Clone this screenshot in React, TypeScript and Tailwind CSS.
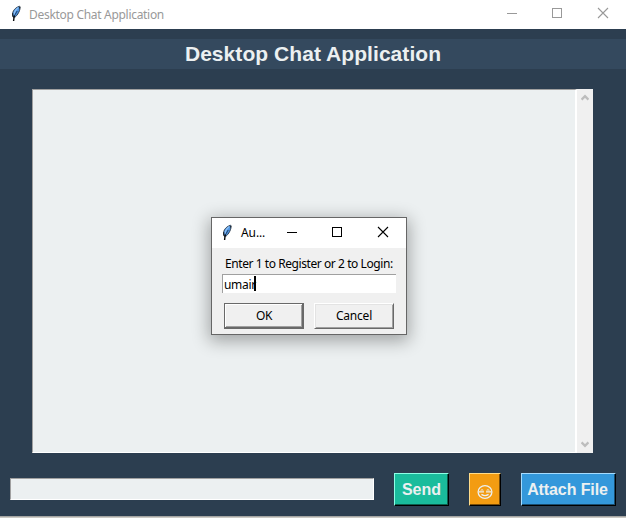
const Feather = () => (
  <svg width="12" height="17" viewBox="0 0 12 17" aria-hidden="true">
    <path d="M3.2 12.2C1.3 8 3.6 3.2 9.6 1.2C11 2 9.4 8.5 5.2 12Z" fill="#4d94e4" stroke="#26323f" strokeWidth="0.9" />
    <path d="M8.4 2.6C6.2 4 4.4 6.6 4 9.6" fill="none" stroke="#8cc0f5" strokeWidth="1.3" />
    <path d="M7.2 6C5.6 8.6 4.6 10.4 4.2 12" fill="none" stroke="#10243c" strokeWidth="0.8" />
    <path d="M4.2 10.5L3.6 16" fill="none" stroke="#050709" strokeWidth="1.4" />
    <path d="M2.8 8.2V11.5M9.4 3.5L9.9 2" stroke="#111" strokeWidth="0.9" />
  </svg>
);

const WindowControls = ({ className }: { className: string }) => (
  <svg width="107" height="12" viewBox="0 0 107 12" className={className} shapeRendering="crispEdges" fill="none" stroke="currentColor" aria-hidden="true">
    <path d="M1 6.5h10M46.5 1.5h9v9h-9z" />
    <path d="M92 1l10 10M102 1l-10 10" shapeRendering="auto" strokeWidth="1.1" />
  </svg>
);

const ScrollArrow = ({ down = false }: { down?: boolean }) => (
  <svg width="8" height="7" viewBox="0 0 8 7" className={down ? "rotate-180" : ""} aria-hidden="true">
    <path d="M0.5 5.6L4 2.1L7.5 5.6" fill="none" stroke="#bdbdbd" strokeWidth="2.4" />
  </svg>
);

const Emoji = () => (
  <svg width="16" height="16" viewBox="0 0 16 16" fill="none" stroke="#ecf0f1" aria-hidden="true">
    <ellipse cx="8" cy="8" rx="6.9" ry="6.3" strokeWidth="1.3" />
    <path d="M1.8 7.8h5.2M9 7.8h5.2" strokeWidth="1.2" />
    <path d="M3.6 6.6q1.3-1.6 2.8-0.3M9.6 6.3q1.5-1.3 2.8 0.3" strokeWidth="1" />
    <path d="M4.4 10.4q3.6 2.3 7.2 0" strokeWidth="1.3" />
  </svg>
);

const AuthDialog = () => (
  <div className="absolute left-[211px] top-[217px] flex h-[118px] w-[196px] flex-col border border-[#666] bg-[#f0f0f0] text-black shadow-[0_4px_16px_2px_rgba(0,0,0,0.32)]">
    <div className="flex h-[30px] shrink-0 items-center bg-white pl-[9px]">
      <div className="-mt-[2px]"><Feather /></div>
      <span className="ml-[8px] w-[45px] text-[12px] tracking-[-0.1px]">Au...</span>
      <WindowControls className="mt-[-2px] shrink-0" />
    </div>
    <div className="mt-[7px] flex h-[18px] items-center pl-[13px] text-[12px] leading-[18px] tracking-[-0.43px] whitespace-nowrap">Enter 1 to Register or 2 to Login:</div>
    <div className="mt-[1px] ml-[10px] flex h-[19px] w-[174px] items-center border-t border-l border-[#a0a0a0] bg-white pl-[1px] text-[12px] leading-[17px] tracking-[-0.3px]">
      <span className="w-[30px] overflow-visible">umair</span><span className="mt-[-1px] h-[15px] w-[2px] bg-black" />
    </div>
    <div className="mt-[10px] flex gap-[10px] pl-[12px] text-[12px] leading-[22px]">
      <button className="h-[26px] w-[80px] border border-r-2 border-b-2 border-[#696969] bg-[#f0f0f0] pl-[1px] tracking-[-0.3px] shadow-[inset_1px_1px_#fff,inset_-1px_-1px_#a0a0a0]">OK</button>
      <button className="h-[26px] w-[80px] border border-t-white border-r-[#696969] border-b-[#696969] border-l-white tracking-[-0.2px] shadow-[inset_1px_1px_#e3e3e3,inset_-1px_-1px_#a0a0a0]">Cancel</button>
    </div>
  </div>
);

export default function App() {
  return (
    <div className="relative flex h-[518px] w-[626px] flex-col overflow-hidden bg-[#2c3e50] font-['Noto_Sans',sans-serif]">
      <header className="flex h-[29px] shrink-0 items-center bg-white pl-[10px]">
        <div className="-mt-[2px]"><Feather /></div>
        <span className="ml-[7px] w-[477px] text-[12px] tracking-[-0.3px] text-[#999]">Desktop Chat Application</span>
        <WindowControls className="mt-[-3px] shrink-0 text-[#999]" />
      </header>
      <h1 className="mt-[10px] h-[30px] shrink-0 bg-[#34495e] text-center font-['Liberation_Sans',sans-serif] text-[21px] leading-[30px] font-bold tracking-[0.06px] text-[#ecf0f1]">Desktop Chat Application</h1>
      <main className="mt-[20px] ml-[32px] flex h-[364px] w-[561px] shrink-0">
        <div className="w-[545px] border border-t-[#a0a0a0] border-r-2 border-r-white border-b-white border-l-[#a0a0a0] bg-[#ecf0f1]" />
        <div className="flex w-[16px] flex-col items-center justify-between bg-[#f0f0f0] py-[5px]">
          <ScrollArrow /><ScrollArrow down />
        </div>
      </main>
      <footer className="mt-[20px] flex h-[33px] shrink-0 items-start pl-[10px] font-['Liberation_Sans',sans-serif] text-[16px] leading-[30px] font-bold text-[#ecf0f1]">
        <div className="mt-[5px] h-[22px] w-[364px] border border-t-[#a0a0a0] border-r-white border-b-white border-l-[#a0a0a0] bg-[#ecf0f1]" />
        <button className="ml-[20px] h-[33px] w-[55px] border border-t-[#8effe5] border-r-black border-b-black border-l-[#8effe5] bg-[#1abc9c] shadow-[inset_-1px_-1px_#0d5e4e]">Send</button>
        <button className="ml-[20px] flex h-[33px] w-[32px] items-center justify-center border border-t-[#ffdc8a] border-r-black border-b-black border-l-[#ffdc8a] bg-[#f39c12] pt-[4px] shadow-[inset_-1px_-1px_#7a4e09]"><Emoji /></button>
        <button className="ml-[20px] h-[33px] w-[95px] border border-t-[#a6dcff] border-r-black border-b-black border-l-[#a6dcff] bg-[#3498db] pr-[2px] tracking-[-0.1px] whitespace-nowrap shadow-[inset_-1px_-1px_#1a4c6e]">Attach File</button>
      </footer>
      <div className="mt-auto h-[2px] shrink-0 border-t border-[#a5a5a3] bg-[#cbc9c4]" />
      <AuthDialog />
    </div>
  );
}
